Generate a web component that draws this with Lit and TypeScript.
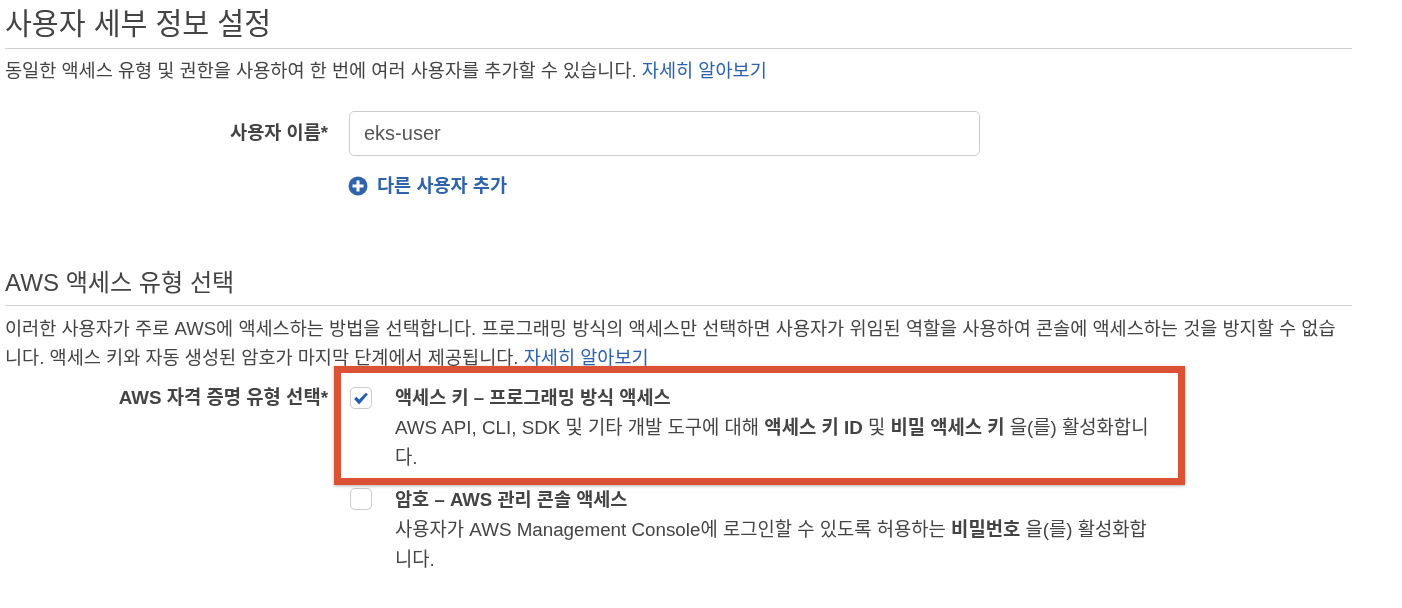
import { LitElement, html, css } from "lit";
import { customElement } from "lit/decorators.js";

@customElement("app-root")
export class AppRoot extends LitElement {
  static styles = css`
    :host {
      display: block;
      position: relative;
      width: 1402px;
      height: 608px;
      overflow: hidden;
      background: #fff;
      color: #444;
      font-family: "Liberation Sans", "Noto Sans CJK KR", sans-serif;
      font-size: 18.6px;
    }
    .page {
      padding: 0 50px 0 5px;
      filter: blur(0.4px);
    }
    h2 {
      margin: 0;
      font-weight: 400;
      line-height: 30px;
      color: #444;
      border-bottom: 1px solid #d0d0d0;
    }
    h2.h1 { padding: 9px 0 9px; font-size: 29.2px; }
    h2.h2 { padding: 1px 0 7px; margin-top: 69px; font-size: 24.1px; }
    p { margin: 0; }
    .desc1 { margin-top: 7px; line-height: 30px; }
    .desc2 { margin-top: 8px; line-height: 29px; }
    a { color: #2a62b0; }
    .row {
      display: grid;
      grid-template-columns: 323px 1fr;
      column-gap: 21px;
    }
    .label {
      font-weight: 700;
      text-align: right;
      color: #444;
      white-space: nowrap;
    }
    .name-row { margin-top: 25px; }
    .name-row .label { line-height: 44px; }
    input {
      display: block;
      box-sizing: border-box;
      width: 631px;
      height: 45px;
      border: 1px solid #ccc;
      border-radius: 5px;
      padding: 0 14px;
      font: inherit;
      font-size: 20px;
      color: #555;
      outline: none;
    }
    .add {
      display: flex;
      align-items: center;
      gap: 9px;
      margin: 18px 0 0 -1px;
      font-weight: 700;
      color: #2f64ad;
      line-height: 24px;
    }
    .add svg { display: block; }
    .cred { margin-top: 10px; }
    .cred .label { line-height: 30px; padding-top: 1px; font-size: 18.8px; }
    .option {
      display: grid;
      grid-template-columns: 22px 1fr;
      column-gap: 23px;
      width: 805px;
      line-height: 30px;
    }
    .option + .option { margin-top: 10px; }
    .opt-text { padding: 1px 0 0 1px; }
    .option + .option .opt-text { padding-top: 2px; }
    .opt-body { font-size: 18.8px; }
    .box {
      box-sizing: border-box;
      width: 22px;
      height: 22px;
      margin: 5px 0 0 1px;
      border: 1px solid #ccc;
      border-radius: 5px;
      background: #fff;
      box-shadow: 0 0 1px rgba(0, 0, 0, 0.1);
      display: flex;
      align-items: center;
      justify-content: center;
    }
    b { font-weight: 700; }
    .highlight {
      position: absolute;
      left: 334px;
      top: 366px;
      width: 851px;
      height: 119px;
      box-sizing: border-box;
      border: 7px solid #dc5034;
      box-shadow: 0 1px 3px rgba(0, 0, 0, 0.3);
      pointer-events: none;
    }
  `;

  render() {
    return html`
      <div class="page">
        <h2 class="h1">사용자 세부 정보 설정</h2>
        <p class="desc1">동일한 액세스 유형 및 권한을 사용하여 한 번에 여러 사용자를 추가할 수 있습니다. <a>자세히 알아보기</a></p>
        <div class="row name-row">
          <div class="label">사용자 이름*</div>
          <div>
            <input value="eks-user" />
            <div class="add">
              <svg width="20" height="20" viewBox="0 0 20 20">
                <circle cx="10" cy="10" r="9.5" fill="#2f64ad" />
                <path d="M10 4.5v11M4.5 10h11" stroke="#fff" stroke-width="3" />
              </svg>
              <span>다른 사용자 추가</span>
            </div>
          </div>
        </div>
        <h2 class="h2">AWS 액세스 유형 선택</h2>
        <p class="desc2">이러한 사용자가 주로 AWS에 액세스하는 방법을 선택합니다. 프로그래밍 방식의 액세스만 선택하면 사용자가 위임된 역할을 사용하여 콘솔에 액세스하는 것을 방지할 수 없습니다. 액세스 키와 자동 생성된 암호가 마지막 단계에서 제공됩니다. <a>자세히 알아보기</a></p>
        <div class="row cred">
          <div class="label">AWS 자격 증명 유형 선택*</div>
          <div>
            <div class="option">
              <div class="box">
                <svg width="16" height="13" viewBox="0 0 16 14">
                  <path d="M0.5 7.5 3.2 5.2 6 8.2 13.2 0.8 15.5 2.5 6 13.5Z" fill="#2a5fb0" />
                </svg>
              </div>
              <div class="opt-text">
                <b>액세스 키 – 프로그래밍 방식 액세스</b><br />
                <span class="opt-body">AWS API, CLI, SDK 및 기타 개발 도구에 대해 <b>액세스 키 ID</b> 및 <b>비밀 액세스 키</b> 을(를) 활성화합니다.</span>
              </div>
            </div>
            <div class="option">
              <div class="box"></div>
              <div class="opt-text">
                <b>암호 – AWS 관리 콘솔 액세스</b><br />
                <span class="opt-body">사용자가 AWS Management Console에 로그인할 수 있도록 허용하는 <b>비밀번호</b> 을(를) 활성화합니다.</span>
              </div>
            </div>
          </div>
        </div>
      </div>
      <div class="highlight"></div>
    `;
  }
}
